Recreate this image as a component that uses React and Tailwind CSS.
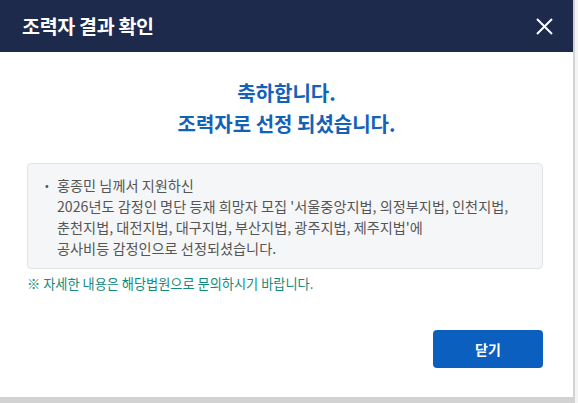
import React from 'react';

const font = { fontFamily: '"Noto Sans CJK KR", "Noto Sans", sans-serif' };

const App = () => {
  return (
    <div className="w-[578px] h-[403px] bg-[#d2d2d2] flex overflow-hidden" style={font}>
      <div className="w-[573px] h-[397px] bg-white flex flex-col">
        {/* Header */}
        <div className="h-[52px] bg-[#1d2a4c] flex items-center justify-between pl-[22px] pr-[20px]">
          <h2 className="text-[19.5px] font-bold text-white tracking-[-0.3px]">조력자 결과 확인</h2>
          <button className="text-white">
            <svg className="w-[17px] h-[17px]" viewBox="0 0 17 17" fill="none" stroke="currentColor" strokeWidth="2">
              <path d="M1 1l15 15M16 1L1 16" />
            </svg>
          </button>
        </div>

        {/* Body */}
        <div className="flex-1 flex flex-col px-[27px] pt-[25px]">
          <div className="text-center text-[20px] font-bold text-[#1461b8] leading-[31px]">
            <p>축하합니다.</p>
            <p>조력자로 선정 되셨습니다.</p>
          </div>

          <div className="mt-[24px] w-[516px] border border-[#e1e3e6] bg-[#f5f6f8] rounded-[4px] pl-[17px] pr-2 pt-[11px] pb-[9px] text-[14.2px] leading-[21px] text-[#555]">
            <div className="flex">
              <span className="w-[12px] shrink-0 text-[11px]">•</span>
              <p>
                홍종민 님께서 지원하신<br />
                2026년도 감정인 명단 등재 희망자 모집 '서울중앙지법, 의정부지법, 인천지법,<br />
                춘천지법, 대전지법, 대구지법, 부산지법, 광주지법, 제주지법'에<br />
                공사비등 감정인으로 선정되셨습니다.
              </p>
            </div>
          </div>

          <p className="mt-[6px] text-[13.2px] leading-[18px] text-[#118a7e]">※ 자세한 내용은 해당법원으로 문의하시기 바랍니다.</p>

          <div className="flex justify-end w-[516px] mt-[37px]">
            <button className="w-[110px] h-[38px] bg-[#0b5fbf] rounded-[4px] text-white text-[14px] font-bold">닫기</button>
          </div>
        </div>
      </div>
      <div className="w-[3px] ml-[2px] h-[403px] bg-[#f4f4f4]"></div>
    </div>
  );
};

export default App;
